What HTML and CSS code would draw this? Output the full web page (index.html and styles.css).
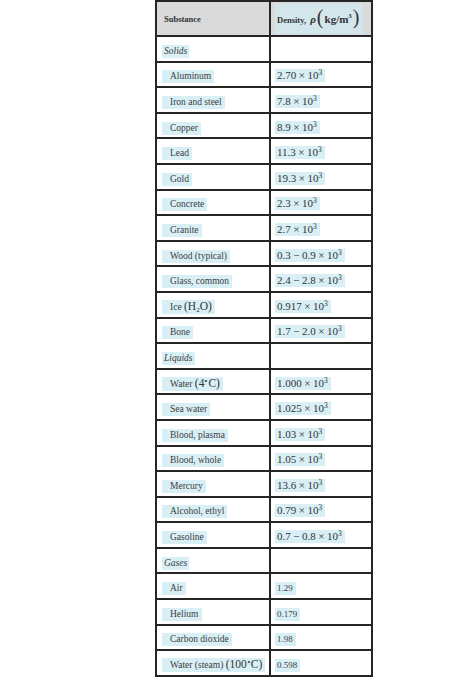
FILE: index.html
```html
<!DOCTYPE html>
<html>
<head>
<meta charset="utf-8">
<link rel="stylesheet" href="styles.css">
</head>
<body>
<div class="wrap">
<table class="density">
<thead>
<tr class="head">
<th class="c1"><span class="hl hsub">Substance</span></th>
<th class="c2"><span class="hl hden">Density, <i class="rho">ρ</i><span class="paren">(</span><b class="unit">kg/m<sup>3</sup></b><span class="paren">)</span></span></th>
</tr>
</thead>
<tbody>
<tr><td><span class="hl cat">Solids</span></td><td></td></tr>
<tr><td><span class="hl item">Aluminum</span></td><td><span class="hl num">2.70<span class="op">×</span>10<sup>3</sup></span></td></tr>
<tr><td><span class="hl item">Iron and steel</span></td><td><span class="hl num">7.8<span class="op">×</span>10<sup>3</sup></span></td></tr>
<tr><td><span class="hl item">Copper</span></td><td><span class="hl num">8.9<span class="op">×</span>10<sup>3</sup></span></td></tr>
<tr><td><span class="hl item">Lead</span></td><td><span class="hl num">11.3<span class="op">×</span>10<sup>3</sup></span></td></tr>
<tr><td><span class="hl item">Gold</span></td><td><span class="hl num">19.3<span class="op">×</span>10<sup>3</sup></span></td></tr>
<tr><td><span class="hl item">Concrete</span></td><td><span class="hl num">2.3<span class="op">×</span>10<sup>3</sup></span></td></tr>
<tr><td><span class="hl item">Granite</span></td><td><span class="hl num">2.7<span class="op">×</span>10<sup>3</sup></span></td></tr>
<tr><td><span class="hl item">Wood (typical)</span></td><td><span class="hl num">0.3<span class="op">−</span>0.9<span class="op">×</span>10<sup>3</sup></span></td></tr>
<tr><td><span class="hl item">Glass, common</span></td><td><span class="hl num">2.4<span class="op">−</span>2.8<span class="op">×</span>10<sup>3</sup></span></td></tr>
<tr><td><span class="hl item">Ice <span class="m">(H<sub>2</sub>O)</span></span></td><td><span class="hl num">0.917<span class="op">×</span>10<sup>3</sup></span></td></tr>
<tr><td><span class="hl item">Bone</span></td><td><span class="hl num">1.7<span class="op">−</span>2.0<span class="op">×</span>10<sup>3</sup></span></td></tr>
<tr><td><span class="hl cat">Liquids</span></td><td></td></tr>
<tr><td><span class="hl item">Water <span class="m">(4<sup>∘</sup>C)</span></span></td><td><span class="hl num">1.000<span class="op">×</span>10<sup>3</sup></span></td></tr>
<tr><td><span class="hl item">Sea water</span></td><td><span class="hl num">1.025<span class="op">×</span>10<sup>3</sup></span></td></tr>
<tr><td><span class="hl item">Blood, plasma</span></td><td><span class="hl num">1.03<span class="op">×</span>10<sup>3</sup></span></td></tr>
<tr><td><span class="hl item">Blood, whole</span></td><td><span class="hl num">1.05<span class="op">×</span>10<sup>3</sup></span></td></tr>
<tr><td><span class="hl item">Mercury</span></td><td><span class="hl num">13.6<span class="op">×</span>10<sup>3</sup></span></td></tr>
<tr><td><span class="hl item">Alcohol, ethyl</span></td><td><span class="hl num">0.79<span class="op">×</span>10<sup>3</sup></span></td></tr>
<tr><td><span class="hl item">Gasoline</span></td><td><span class="hl num">0.7<span class="op">−</span>0.8<span class="op">×</span>10<sup>3</sup></span></td></tr>
<tr><td><span class="hl cat">Gases</span></td><td></td></tr>
<tr><td><span class="hl item">Air</span></td><td><span class="hl txt">1.29</span></td></tr>
<tr><td><span class="hl item">Helium</span></td><td><span class="hl txt">0.179</span></td></tr>
<tr><td><span class="hl item">Carbon dioxide</span></td><td><span class="hl txt">1.98</span></td></tr>
<tr><td><span class="hl item">Water (steam) <span class="m">(100<sup>∘</sup>C)</span></span></td><td><span class="hl txt">0.598</span></td></tr>
</tbody>
</table>
</div>
</body>
</html>
```

FILE: styles.css
```css
html, body {
  margin: 0;
  padding: 0;
  background: #ffffff;
}

.wrap {
  padding-left: 155px;
}

.density {
  border-collapse: collapse;
  width: 216px;
  table-layout: fixed;
  font-family: "Liberation Serif", "Times New Roman", serif;
  color: #3d3d3d;
}

.density th,
.density td {
  box-sizing: border-box;
  border: 2px solid #262626;
  padding: 0;
  text-align: left;
  vertical-align: middle;
  white-space: nowrap;
  overflow: visible;
}

.density .c1 { width: 114px; }
.density .c2 { width: 102px; }

.density tr { height: 25.6px; }
.density tr.head { height: 35px; }

.density td:first-child,
.density th:first-child { padding-left: 5px; }
.density td + td,
.density th + th { padding-left: 4px; }

.head th {
  background: #dadada;
  font-weight: normal;
}

.hl {
  display: inline-block;
  background: #d8eff6;
  line-height: 13px;
  font-size: 9.5px;
}

.hsub {
  font-size: 8.5px;
  font-weight: bold;
  color: #333333;
  background: transparent;
  padding: 0 2px;
  position: relative;
  top: -2px;
}

.hden {
  font-size: 8.5px;
  font-weight: bold;
  color: #333333;
  background: #d3e6ec;
  line-height: 27px;
  padding: 0 3px 0 2px;
}

.rho {
  font-size: 11px;
  font-weight: bold;
  font-style: italic;
  margin-left: 2px;
  margin-right: 1px;
}

.paren {
  font-size: 20px;
  font-weight: normal;
  vertical-align: -1px;
}

.unit {
  font-size: 11px;
  font-weight: bold;
  margin: 0 1px;
}

.unit sup {
  font-size: 7px;
  vertical-align: 5px;
  line-height: 0;
}

.cat {
  font-style: italic;
  padding: 0 2px;
}

.item {
  padding: 0 3px 0 8px;
}

.num {
  font-size: 11px;
  color: #333333;
  padding: 0 3px 0 2px;
}

.txt {
  font-size: 9px;
  padding: 0 3px 0 2px;
}

.op {
  margin: 0 2.5px;
}

.num sup {
  font-size: 7.5px;
  vertical-align: 4.5px;
  line-height: 0;
}

.m {
  font-size: 11.5px;
  color: #333333;
}

.m sub {
  font-size: 7px;
  vertical-align: -2px;
  line-height: 0;
}

.m sup {
  font-size: 6px;
  vertical-align: 5px;
  line-height: 0;
}
```
